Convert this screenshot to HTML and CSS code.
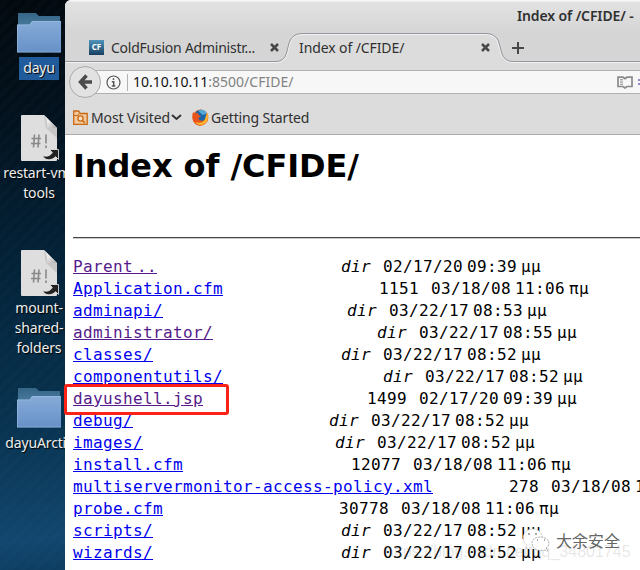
FILE: index.html
```html
<!DOCTYPE html>
<html lang="en">
<head>
<meta charset="utf-8">
<title>Index of /CFIDE/</title>
<link rel="stylesheet" href="styles.css">
</head>
<body>
<svg class="defs" width="0" height="0">
  <defs>
    <linearGradient id="blue" x2="0" y2="1"><stop stop-color="#86abd8"/><stop offset="1" stop-color="#6791c7"/></linearGradient>
    <linearGradient id="bluedark" x2="0" y2="1"><stop stop-color="#356585"/><stop offset="1" stop-color="#4b7da2"/></linearGradient>
    <linearGradient id="fold" x2="1" y2="1"><stop offset=".4" stop-color="#eee"/><stop offset="1" stop-color="#aaa"/></linearGradient>
    <symbol id="folder" viewBox="0 0 44 40">
      <path d="M1 0h18l3 3h21v12H1z" fill="url(#bluedark)"/>
      <path d="M0 11.500h12.500l2.500-3.500h29v31.500H0z" fill="url(#blue)"/>
      <path d="M.5 39V12h12.500l2.500-3.500H44M0 39h44" fill="none" stroke="#a4c1e2" stroke-opacity=".5"/>
    </symbol>
    <symbol id="script" viewBox="0 0 38 46">
      <path d="M1 0h22l13 13v32a1 1 0 0 1-1 1H1a1 1 0 0 1-1-1V1a1 1 0 0 1 1-1z" fill="#dedede"/>
      <path d="M23 0l13 13v10L25 13z" fill="#aaa" opacity=".45"/>
      <path d="M23 0l13 13H26q1-8-3-13z" fill="url(#fold)"/>
      <path d="M13.500 19.500l-1 13M18 19.500l-1 13M10.500 23.500h9.500M10 28.500h9.500M25 19.500v9M25 30.500v2.500" fill="none" stroke="#888" stroke-width="1.600"/>
      <path d="M28.500 34.500h9v10l-2.800-2.800c-4.500 4.500-11 4-13.200-1.200 4 1.500 8 .5 9.800-3z" fill="#222" stroke="#eee" stroke-width=".8"/>
    </symbol>
  </defs>
</svg>
<div class="desktop">
  <div class="item item-1"><svg width="44" height="40"><use href="#folder"/></svg><span class="selected">dayu</span></div>
  <div class="item item-2"><svg width="38" height="46"><use href="#script"/></svg><span>restart-vm-<br>tools</span></div>
  <div class="item item-3"><svg width="38" height="46"><use href="#script"/></svg><span>mount-<br>shared-<br>folders</span></div>
  <div class="item item-4"><svg width="44" height="40"><use href="#folder"/></svg><span>dayuArctic</span></div>

  <main class="window">
    <header class="titlebar">Index of /CFIDE/ -</header>
    <nav class="tabs">
      <svg class="tab-shape" width="575" height="32" viewBox="0 0 575 32">
        <path d="M0 28.500H211Q219 28.500 221.500 20L224 10Q227 .5 237 .5H421Q430 .5 433.500 8L437 21Q440 28.500 448 28.500H575V32H0z" fill="#dcdcdc"/>
        <path d="M0 29.500H211Q220 29.500 222.500 20L225 10Q228 1.500 237 1.500H421Q430 1.500 432.500 9L436 21Q440 29.500 448 29.500H575" fill="none" stroke="#f2f2f2"/>
        <path d="M0 28.500H211Q219 28.500 221.500 20L224 10Q227 .5 237 .5H421Q430 .5 433.500 8L437 21Q440 28.500 448 28.500H575" fill="none" stroke="#92979d"/>
      </svg>
      <div class="tab tab-one"><span class="cf">CF</span><span class="tab-name">ColdFusion Administr...</span><svg class="x" width="9" height="9" viewBox="0 0 9 9"><path d="M1 1l7 7M8 1L1 8"/></svg></div>
      <div class="tab tab-two"><span class="tab-index">Index of /CFIDE/</span><svg class="x" width="9" height="9" viewBox="0 0 9 9"><path d="M1 1l7 7M8 1L1 8"/></svg></div>
      <svg class="plus" width="12" height="12"><path d="M6 0v12M0 6h12" stroke="#484848" stroke-width="2"/></svg>
    </nav>
    <div class="toolbar">
      <div class="address">
        <svg class="info" width="15" height="15" viewBox="0 0 15 15"><circle cx="7.500" cy="7.500" r="6.500" fill="none" stroke="#555" stroke-width="1.200"/><path d="M7.500 3.200v1.900M5.800 6.700h1.900v4M5.700 11h3.700" fill="none" stroke="#555" stroke-width="1.500"/></svg>
        <span class="separator"></span>
        <span class="url"><b>10.10.10.11</b>:8500/CFIDE/</span>
        <svg class="reader" width="16" height="13" viewBox="0 0 16 13"><path d="M1 1.200h5l2 1.500 2-1.500h5v9.300h-5l-2 1.500-2-1.500H1z" fill="none" stroke="#8b8b8b" stroke-width="1.700"/><path d="M3 3.800h3M3 6h3M3 8.200h3" stroke="#888"/></svg>
        <span class="menu-dots"></span>
      </div>
      <div class="back"><svg width="14" height="16" viewBox="0 0 14 16"><path d="M8.500 1.500L2.500 8l6 6.500M3 8h11" fill="none" stroke="#4b4b4b" stroke-width="3.500"/></svg></div>
    </div>
    <div class="bookmarks">
      <svg width="15" height="15" viewBox="0 0 15 15"><path d="M.7 1h5l1.500 2.500h7v10.800H.7z" fill="#f1c99d" stroke="#c86914" stroke-width="1.300"/><path d="M1 5.500h4l1-2" fill="none" stroke="#c86914"/><circle cx="7.500" cy="8.500" r="2.600" fill="#f8dfc2" stroke="#c86914" stroke-width="1.300"/><path d="M9.500 10.500l2.500 2.500" stroke="#c86914" stroke-width="1.500"/></svg>
      <span class="visited-label">Most Visited</span>
      <svg class="chevron" width="11" height="7" viewBox="0 0 11 7"><path d="M1 1l4.500 4L10 1" fill="none" stroke="#333" stroke-width="2"/></svg>
      <svg class="fox" width="17" height="17" viewBox="0 0 17 17"><circle cx="8.500" cy="8.500" r="7.900" fill="#ef6b1b"/><circle cx="8.800" cy="6.800" r="6.100" fill="#1b65a8"/><path d="M6 1.600c4-2 8 0 9 3L10.500 6z" fill="#57a9d6"/><path d="M1 3l2 1.500 3-.5.500 2 2.500 1-2.500 2c0 3 4.500 4 7 1l2-6c2 7-2 13-8 12.800C1 16-.8 9.500 1 3z" fill="#e9531b"/><path d="M15 3.500c2 4.500 1 9.500-3 11.500-3 2-7 1-9-2 5 2 9 0 10-3z" fill="#fcb52c"/></svg>
      <span class="started-label">Getting Started</span>
    </div>
    <section class="page">
      <h1>Index of /CFIDE/</h1>
      <hr>
<pre><a class="seen">Parent ..</a>                                              <i>dir</i>   02/17/20 09:39 μμ
<a>Application.cfm</a>                                       1151   03/18/08 11:06 πμ
<a>adminapi/</a>                                              <i>dir</i>   03/22/17 08:53 μμ
<a class="seen">administrator/</a>                                         <i>dir</i>   03/22/17 08:55 μμ
<a>classes/</a>                                               <i>dir</i>   03/22/17 08:52 μμ
<a>componentutils/</a>                                        <i>dir</i>   03/22/17 08:52 μμ
<a class="seen">dayushell.jsp</a>                                         1499   02/17/20 09:39 μμ
<a>debug/</a>                                                 <i>dir</i>   03/22/17 08:52 μμ
<a>images/</a>                                                <i>dir</i>   03/22/17 08:52 μμ
<a>install.cfm</a>                                          12077   03/18/08 11:06 πμ
<a>multiservermonitor-access-policy.xml</a>                   278   03/18/08 11:06 πμ
<a>probe.cfm</a>                                            30778   03/18/08 11:06 πμ
<a>scripts/</a>                                               <i>dir</i>   03/22/17 08:52 μμ
<a>wizards/</a>                                               <i>dir</i>   03/22/17 08:52 μμ</pre>
    </section>
  </main>
  <div class="highlight"></div>
  <div class="blog-mark">https://blog.csdn.net/qq_34801745</div>
  <div class="account-mark">
    <svg width="28" height="25" viewBox="0 0 28 25"><path d="M9 19l-5 2 1-4C-2 12 1 1 11 1c6 0 9 4 9 8" fill="#fff" stroke="#bbb" stroke-width=".7" stroke-dasharray="2 1"/><path d="M24 20l2 3-4-1c-7 2-12-2-12-7 0-8 16-8 17 0 0 2-1 4-3 5z" fill="#fff" stroke="#888" stroke-width=".7" stroke-dasharray="2 1"/><path d="M7 5v2M14 5v2M15 12h1M22 12h1" stroke="#555"/></svg>
    <span>大余安全</span>
  </div>
</div>
</body>
</html>
```
FILE: styles.css
```css
* { box-sizing: border-box; }
body { margin: 0; font-family: "Noto Sans", sans-serif; font-size: 14px; color: #303030; }
svg { display: block; flex: none; }
.defs { position: absolute; }
.desktop {
  position: relative; width: 640px; height: 570px; overflow: hidden;
  background: repeating-linear-gradient(135deg, rgba(90,150,190,0) 0, rgba(90,150,190,.035) 5px, rgba(90,150,190,0) 9px), linear-gradient(173deg, #02080d 0, #02101b 110px, #032238 270px, #083350 430px, #12466e 540px, #0d3d61 570px);
}
.item { position: absolute; display: flex; flex-direction: column; align-items: center; width: 90px; left: -6px; color: #eee; text-align: center; line-height: 20px; text-shadow: 1px 1px 1px #000; white-space: nowrap; }
.item-1 { top: 13px; }
.item-2 { top: 115px; }
.item-3 { top: 250px; }
.item-4 { top: 388px; }
.item-2 svg, .item-3 svg { margin-left: 2px; }
.item span { margin-top: 2px; letter-spacing: -.15px; }
.item .selected { margin-top: 4px; padding: 1px 4px 2px; background: #205b9c; }
.item-4 span { margin-top: 5px; }
.window { position: absolute; left: 65px; top: 0; width: 575px; height: 570px; overflow: hidden; border-radius: 6px 0 0; background: #fff; }
.titlebar { height: 33px; padding: 6px 0 0 452px; background: linear-gradient(#f6f6f6 0 1px, #e2e2e2 2px, #d5d5d5); font-size: 14px; font-weight: 600; line-height: 20px; letter-spacing: -.12px; white-space: nowrap; }
.tabs { position: relative; display: flex; align-items: flex-start; height: 32px; background: #d5d5d5; }
.tab-shape { position: absolute; left: 0; top: 0; }
.tab { position: relative; display: flex; align-items: center; height: 29px; }
.tab-one { width: 220px; padding-left: 24px; }
.tab-two { width: 227px; padding-left: 14px; }
.cf { width: 15px; height: 15px; margin-right: 7px; background: linear-gradient(#4f94bb, #183f61); color: #fff; font-size: 8px; font-weight: bold; line-height: 14px; text-align: center; }
.tab-name { width: 159px; letter-spacing: -.24px; }
.tab-index { width: 182px; letter-spacing: -.1px; }
.x path { stroke: #484848; stroke-width: 2.500; }
.plus { position: relative; margin-top: 9px; }
.toolbar { position: relative; height: 35px; padding-top: 5px; background: #dcdcdc; }
.address { display: flex; align-items: center; height: 24px; margin-left: 20px; padding-left: 21px; border: solid #b1b1b1; border-width: 1px 0; background: #f7f7f7; }
.separator { width: 1px; height: 17px; margin: 0 5px 0 6px; background: #b2b2b2; }
.url { width: 484px; margin-top: -2px; color: #828282; }
.url b { color: #111; font-weight: 400; }
.reader { margin-right: 5px; }
.menu-dots { width: 2px; height: 6px; border: solid #938ac6; border-width: 2px 0; }
.back { position: absolute; left: 4px; top: 1px; display: flex; align-items: center; justify-content: center; width: 32px; height: 32px; border: 1px solid #aaa; border-radius: 50%; background: #e2e2e2; }
.bookmarks { display: flex; align-items: center; height: 35px; padding-left: 8px; border-bottom: 1px solid #aaa; background: #dcdcdc; }
.visited-label { width: 80px; margin-left: 3px; letter-spacing: -.12px; white-space: nowrap; }
.chevron { margin-right: 10px; }
.started-label { margin-left: 2px; letter-spacing: -.16px; }
.page { padding: 11px 0 0 8px; color: #000; }
h1 { height: 40px; margin: 0 0 51px; font: bold 32px/40px "DejaVu Sans", sans-serif; letter-spacing: -.08px; }
hr { height: 2px; margin: 0 0 17px; border: 0; border-top: 1px solid #444; background: #ccc; }
pre { margin: 0; font: 16px/22px "DejaVu Sans Mono", monospace; letter-spacing: .367px; word-spacing: -6px; }
a { color: #00e; text-decoration: underline; }
.seen { color: #551a8b; }
.highlight { position: absolute; left: 64px; top: 384px; width: 165px; height: 31px; border: 3px solid #fb2317; border-radius: 3px; }
.blog-mark { position: absolute; left: 385px; top: 541px; font: 16px/22px "Liberation Sans", sans-serif; color: rgba(130,130,130,.2); }
.account-mark { position: absolute; left: 522px; top: 527px; display: flex; align-items: center; gap: 6px; font: 16px/26px "Noto Sans CJK SC", sans-serif; color: #666; white-space: nowrap; }
```
